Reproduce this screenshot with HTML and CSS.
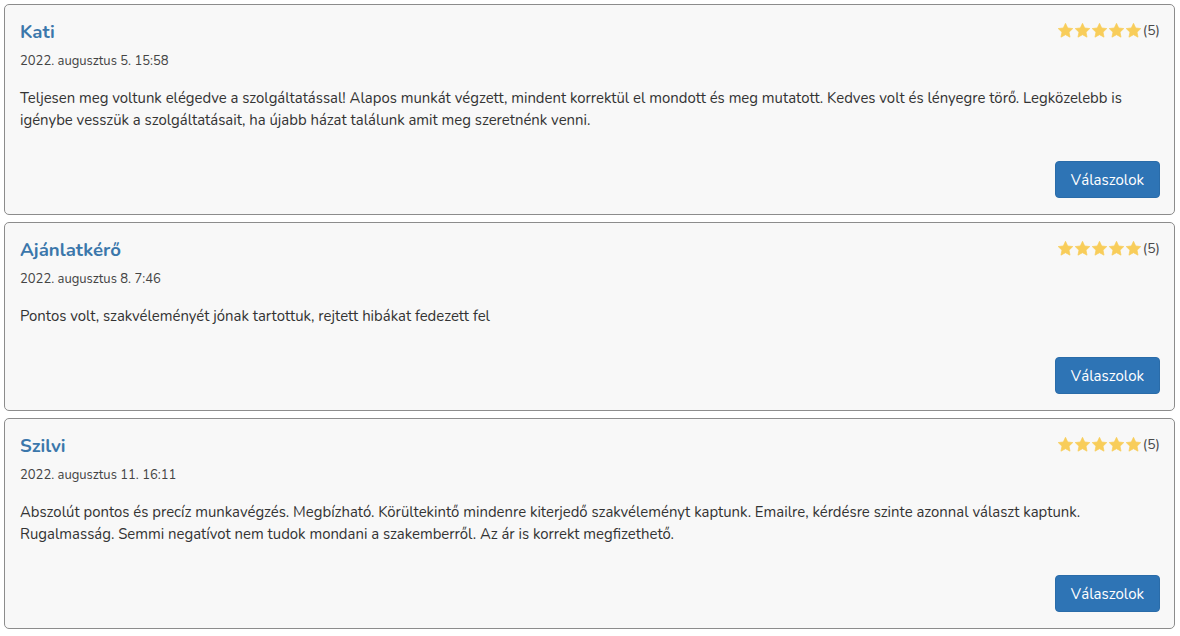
FILE: index.html
```html
<!DOCTYPE html>
<html lang="hu">
<head>
    <meta charset="UTF-8">
    <title>Vélemények</title>
    <link rel="stylesheet" href="styles.css">
</head>
<body>
    <svg width="0" height="0" style="position:absolute">
        <symbol id="star" viewBox="0 0 24 24"><path d="M12 1.8l3.1 6.6 7.2.9-5.3 5 1.4 7.1L12 17.9l-6.4 3.5 1.4-7.1-5.3-5 7.2-.9z" stroke-linejoin="round"/></symbol>
    </svg>

    <div class="review">
        <div class="review-head">
            <span class="review-name">Kati</span>
            <span class="rating">
                <svg class="star"><use href="#star"/></svg><svg class="star"><use href="#star"/></svg><svg class="star"><use href="#star"/></svg><svg class="star"><use href="#star"/></svg><svg class="star"><use href="#star"/></svg>
                <span class="rating-count">(5)</span>
            </span>
        </div>
        <div class="review-date">2022. augusztus 5. 15:58</div>
        <p class="review-text">Teljesen meg voltunk elégedve a szolgáltatással! Alapos munkát végzett, mindent korrektül el mondott és meg mutatott. Kedves volt és lényegre törő. Legközelebb is igénybe vesszük a szolgáltatásait, ha újabb házat találunk amit meg szeretnénk venni.</p>
        <div class="review-actions">
            <button class="reply-btn">Válaszolok</button>
        </div>
    </div>

    <div class="review">
        <div class="review-head">
            <span class="review-name">Ajánlatkérő</span>
            <span class="rating">
                <svg class="star"><use href="#star"/></svg><svg class="star"><use href="#star"/></svg><svg class="star"><use href="#star"/></svg><svg class="star"><use href="#star"/></svg><svg class="star"><use href="#star"/></svg>
                <span class="rating-count">(5)</span>
            </span>
        </div>
        <div class="review-date">2022. augusztus 8. 7:46</div>
        <p class="review-text">Pontos volt, szakvéleményét jónak tartottuk, rejtett hibákat fedezett fel</p>
        <div class="review-actions">
            <button class="reply-btn">Válaszolok</button>
        </div>
    </div>

    <div class="review">
        <div class="review-head">
            <span class="review-name">Szilvi</span>
            <span class="rating">
                <svg class="star"><use href="#star"/></svg><svg class="star"><use href="#star"/></svg><svg class="star"><use href="#star"/></svg><svg class="star"><use href="#star"/></svg><svg class="star"><use href="#star"/></svg>
                <span class="rating-count">(5)</span>
            </span>
        </div>
        <div class="review-date">2022. augusztus 11. 16:11</div>
        <p class="review-text">Abszolút pontos és precíz munkavégzés. Megbízható. Körültekintő mindenre kiterjedő szakvéleményt kaptunk. Emailre, kérdésre szinte azonnal választ kaptunk. Rugalmasság. Semmi negatívot nem tudok mondani a szakemberről. Az ár is korrekt megfizethető.</p>
        <div class="review-actions">
            <button class="reply-btn">Válaszolok</button>
        </div>
    </div>
</body>
</html>
```

FILE: styles.css
```css
body {
    margin: 0;
    padding: 4px 5px 4px 4px;
    font-family: 'Nunito', Lato, 'Noto Sans', sans-serif;
    background: #ffffff;
    color: #212529;
}

.review {
    background: #f8f8f8;
    border: 1px solid #8c8c8c;
    border-radius: 5px;
    padding: 14px 14px 16px 15px;
    margin-bottom: 7px;
}

.review-head {
    display: flex;
    justify-content: space-between;
    align-items: center;
}

.review-name {
    font-size: 18.6px;
    font-weight: 700;
    line-height: 26px;
    color: #3b77ab;
}

.rating {
    display: flex;
    align-items: center;
    margin-top: -4px;
}

.star {
    width: 17px;
    height: 17px;
    fill: #f8cd5a;
    stroke: #f8cd5a;
    stroke-width: 1;
}

.rating-count {
    font-size: 14px;
    color: #4a4a4a;
    margin-left: 1px;
}

.review-date {
    margin-top: 7px;
    font-size: 13px;
    line-height: 18px;
    color: #444;
}

.review-text {
    margin: 17px 0 0;
    font-size: 14.9px;
    line-height: 22px;
    color: #333;
}

.review-actions {
    display: flex;
    justify-content: flex-end;
    margin-top: 30px;
}

.reply-btn {
    height: 37px;
    padding: 0 15px;
    background: #2e74b5;
    color: #fff;
    border: 1px solid #2a6ca9;
    border-radius: 4px;
    font-family: inherit;
    font-size: 15px;
    cursor: pointer;
}
```
